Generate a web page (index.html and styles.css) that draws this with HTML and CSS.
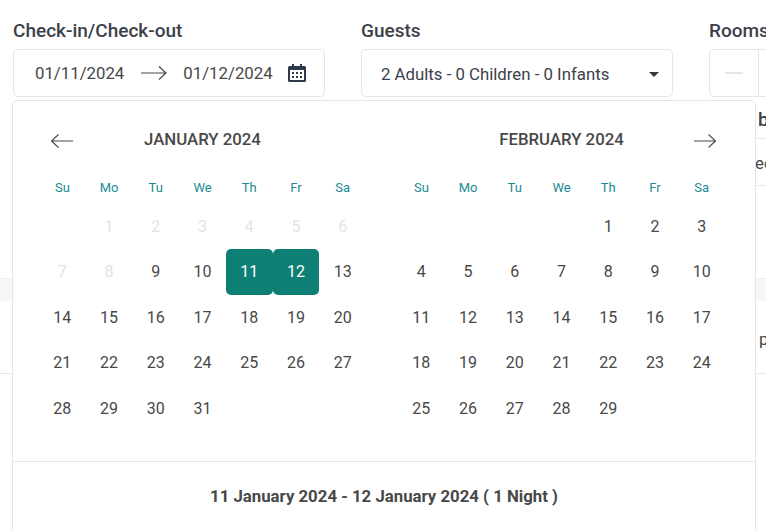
FILE: index.html
```html
<!DOCTYPE html>
<html>
<head>
  <meta charset="utf-8">
  <title>Search rooms</title>
  <link rel="stylesheet" href="styles.css">
</head>
<body>

  <form class="search-bar">
    <div class="field">
      <label class="field-label">Check-in/Check-out</label>
      <div class="box dates">
        <span class="date-value">01/11/2024</span>
        <svg class="date-arrow" width="28" height="16" viewBox="0 0 28 16"><path d="M1 8H26M19 1.5L26 8L19 14.5" fill="none" stroke="#484848" stroke-width="1.2"/></svg>
        <span class="date-value">01/12/2024</span>
        <svg class="date-icon" width="18" height="18" viewBox="0 0 18 18"><path fill="#2f3a4a" fill-rule="evenodd" d="M4 0H6V2H12V0H14V2H16.5A1.5 1.5 0 0 1 18 3.500V16.500A1.500 1.500 0 0 1 16.500 18H1.500A1.500 1.500 0 0 1 0 16.500V3.500A1.500 1.500 0 0 1 1.500 2H4ZM2 6V16H16V6Z"/><path fill="#2f3a4a" d="M4 8H6V10H4ZM8 8H10V10H8ZM12 8H14V10H12ZM4 12H6V14H4ZM8 12H10V14H8ZM12 12H14V14H12Z"/></svg>
      </div>
    </div>

    <div class="field">
      <label class="field-label">Guests</label>
      <div class="box guests">
        <span>2 Adults - 0 Children - 0 Infants</span>
        <span class="caret"></span>
      </div>
    </div>

    <div class="field">
      <label class="field-label">Rooms</label>
      <div class="box rooms">
        <span class="rooms-minus"><span class="minus-bar"></span></span>
      </div>
    </div>
  </form>

  <div class="behind-table">
    <div class="behind-head">b</div>
    <div class="behind-row">ec</div>
  </div>
  <div class="behind-band"></div>
  <div class="behind-line">p</div>

  <div class="calendar">
    <div class="months">
      <div class="month">
        <div class="month-head">
          <svg class="nav nav-prev" width="24" height="16" viewBox="0 0 24 16"><path d="M23 8H1.500M8.500 1.500L1.500 8L8.500 14.500" fill="none" stroke="#484848" stroke-width="1.100"/></svg>
          JANUARY 2024
        </div>
        <div class="weekdays">
          <span>Su</span><span>Mo</span><span>Tu</span><span>We</span><span>Th</span><span>Fr</span><span>Sa</span>
        </div>
        <div class="days">
          <span></span>
          <span class="past">1</span><span class="past">2</span><span class="past">3</span><span class="past">4</span><span class="past">5</span><span class="past">6</span>
          <span class="past">7</span><span class="past">8</span><span>9</span><span>10</span><span class="picked">11</span><span class="picked">12</span><span>13</span>
          <span>14</span><span>15</span><span>16</span><span>17</span><span>18</span><span>19</span><span>20</span>
          <span>21</span><span>22</span><span>23</span><span>24</span><span>25</span><span>26</span><span>27</span>
          <span>28</span><span>29</span><span>30</span><span>31</span>
        </div>
      </div>

      <div class="month">
        <div class="month-head">
          FEBRUARY 2024
          <svg class="nav nav-next" width="24" height="16" viewBox="0 0 24 16"><path d="M1 8H22.500M15.500 1.500L22.500 8L15.500 14.500" fill="none" stroke="#484848" stroke-width="1.100"/></svg>
        </div>
        <div class="weekdays">
          <span>Su</span><span>Mo</span><span>Tu</span><span>We</span><span>Th</span><span>Fr</span><span>Sa</span>
        </div>
        <div class="days">
          <span></span><span></span><span></span><span></span>
          <span>1</span><span>2</span><span>3</span>
          <span>4</span><span>5</span><span>6</span><span>7</span><span>8</span><span>9</span><span>10</span>
          <span>11</span><span>12</span><span>13</span><span>14</span><span>15</span><span>16</span><span>17</span>
          <span>18</span><span>19</span><span>20</span><span>21</span><span>22</span><span>23</span><span>24</span>
          <span>25</span><span>26</span><span>27</span><span>28</span><span>29</span>
        </div>
      </div>
    </div>
    <div class="summary">11 January 2024 - 12 January 2024 ( 1 Night )</div>
  </div>

</body>
</html>
```

FILE: styles.css
```css
html, body {
  margin: 0;
  height: 530px;
  overflow: hidden;
  background: #fff;
}

body {
  position: relative;
  font-family: Roboto, "Liberation Sans", sans-serif;
  color: #484848;
}

.search-bar {
  display: flex;
  gap: 36px;
  padding: 21px 0 0 13px;
  width: 1100px;
}

.field-label {
  display: block;
  font-size: 19px;
  font-weight: 500;
  line-height: 20px;
  margin-bottom: 8px;
  color: #3c4049;
}

.box {
  display: flex;
  align-items: center;
  width: 312px;
  height: 48px;
  box-sizing: border-box;
  border: 1px solid #e6e6e6;
  border-radius: 5px;
  font-size: 16.800px;
}

.dates {
  padding-left: 21px;
}

.date-arrow {
  margin: 0 15px 0 16px;
}

.date-icon {
  margin-left: 15px;
}

.guests {
  justify-content: space-between;
  padding: 2px 13px 0 19px;
  color: #3c4049;
}

.caret {
  border: 5px solid transparent;
  border-top-color: #33373f;
  border-bottom: 0;
}

.rooms {
  width: 160px;
}

.rooms-minus {
  display: flex;
  align-items: center;
  justify-content: center;
  width: 48px;
  height: 100%;
  border-right: 1px solid #e6e6e6;
}

.minus-bar {
  width: 18px;
  height: 2px;
  background: #e6e6e6;
}

/* page content that sits under the calendar */
.behind-table {
  margin-left: 745px;
  width: 200px;
}

.behind-head {
  height: 41px;
  line-height: 46px;
  font-size: 19px;
  font-weight: 500;
  border-bottom: 1px solid #e6e6e6;
  padding-left: 13px;
  color: #3c4049;
}

.behind-row {
  height: 46px;
  line-height: 48px;
  font-size: 16.800px;
  border-bottom: 1px solid #e6e6e6;
  text-indent: 10px;
}

.behind-band {
  height: 23px;
  margin-top: 92px;
  background: #f7f7f7;
  border-top: 1px solid #eee;
  box-sizing: border-box;
}

.behind-line {
  height: 72px;
  line-height: 76px;
  border-bottom: 1px solid #e6e6e6;
  padding-left: 759px;
  font-size: 16.800px;
}

/* date picker popup */
.calendar {
  position: absolute;
  left: 12px;
  top: 100px;
  width: 744px;
  height: 440px;
  box-sizing: border-box;
  background: #fff;
  border: 1px solid #e6e6e6;
  border-radius: 5px;
}

.months {
  display: flex;
  gap: 32px;
  height: 360px;
  padding-left: 26px;
}

.month {
  width: 327px;
}

.month-head {
  position: relative;
  height: 39px;
  padding-top: 28px;
  text-align: center;
  font-size: 16.800px;
  font-weight: 500;
  line-height: 20px;
}

.nav {
  position: absolute;
  top: 32px;
}

.nav-prev {
  left: 11px;
}

.nav-next {
  right: 8px;
}

.weekdays {
  display: grid;
  grid-template-columns: repeat(7, 1fr);
  text-align: center;
  font-size: 13px;
  line-height: 16px;
  margin-top: 12px;
  color: #1c8a96;
}

.days {
  display: grid;
  grid-template-columns: repeat(7, 1fr);
  grid-auto-rows: 45.500px;
  margin-top: 7.750px;
  text-align: center;
  font-size: 16px;
  line-height: 45.500px;
}

.past {
  color: #e6e4e4;
}

.picked {
  background: #0e7f75;
  color: #fff;
  border-radius: 5px;
}

.summary {
  border-top: 1px solid #e6e6e6;
  text-align: center;
  font-size: 16.800px;
  font-weight: 700;
  line-height: 20px;
  padding-top: 24px;
}
```
